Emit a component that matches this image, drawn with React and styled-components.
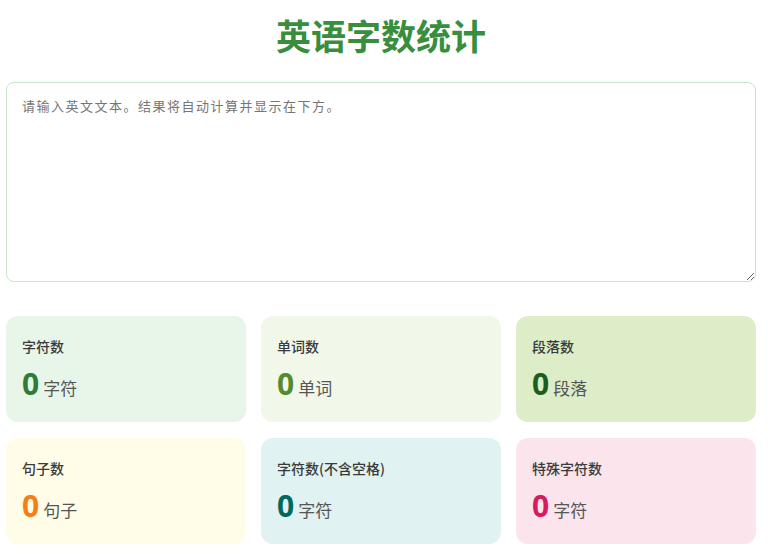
import React from "react";
import styled, { createGlobalStyle } from "styled-components";

const Global = createGlobalStyle`
  html, body { margin: 0; padding: 0; background: #fff; }
  body { font-family: "Noto Sans", "Noto Sans CJK SC", sans-serif; }
`;

const Page = styled.div`
  width: 750px;
  margin: 0 12px 0 6px;
  padding-top: 11px;
`;

const Title = styled.h1`
  margin: 0 0 24px;
  text-align: center;
  font-size: 35px;
  line-height: 47px;
  font-weight: 700;
  color: #388e3c;
  font-family: "Noto Sans CJK SC", sans-serif;
`;

const Input = styled.textarea`
  display: block;
  box-sizing: border-box;
  width: 100%;
  height: 200px;
  padding: 13px 15px;
  border: 1px solid #c8e6c9;
  border-radius: 8px;
  font-family: "Noto Sans CJK SC", sans-serif;
  font-size: 13px;
  letter-spacing: 1.5px;
  line-height: 20px;
  color: #333;
  resize: vertical;
  outline: none;
  &::placeholder { color: #757575; }
`;

const Grid = styled.div`
  display: grid;
  grid-template-columns: repeat(3, 240px);
  column-gap: 15px;
  row-gap: 16px;
  margin-top: 34px;
`;

const Card = styled.div`
  box-sizing: border-box;
  height: 106px;
  padding: 18px 16px 16px;
  border-radius: 12px;
  background: ${(p) => p.$bg};
`;

const Label = styled.div`
  font-family: "Noto Sans CJK SC", sans-serif;
  font-size: 14px;
  font-weight: 500;
  line-height: 24px;
  color: #3a3a3a;
`;

const ValueRow = styled.div`
  display: flex;
  align-items: baseline;
  gap: 4px;
  margin-top: 8px;
`;

const Num = styled.span`
  font-family: "Open Sans", "Noto Sans", sans-serif;
  font-size: 30px;
  font-weight: 700;
  line-height: 36px;
  color: ${(p) => p.$color};
`;

const Unit = styled.span`
  font-family: "Noto Sans CJK SC", sans-serif;
  font-size: 17px;
  color: #555;
`;

const stats = [
  { label: "字符数", unit: "字符", bg: "#e8f5e9", color: "#2e7d32" },
  { label: "单词数", unit: "单词", bg: "#f1f8e9", color: "#558b2f" },
  { label: "段落数", unit: "段落", bg: "#dcedc8", color: "#1b5e20" },
  { label: "句子数", unit: "句子", bg: "#fffde7", color: "#f57f17" },
  { label: "字符数(不含空格)", unit: "字符", bg: "#e0f2f1", color: "#00695c" },
  { label: "特殊字符数", unit: "字符", bg: "#fce4ec", color: "#d81b60" },
];

export default function App() {
  return (
    <>
      <Global />
      <Page>
        <Title>英语字数统计</Title>
        <Input placeholder="请输入英文文本。结果将自动计算并显示在下方。" />
        <Grid>
          {stats.map((s) => (
            <Card key={s.label} $bg={s.bg}>
              <Label>{s.label}</Label>
              <ValueRow>
                <Num $color={s.color}>0</Num>
                <Unit>{s.unit}</Unit>
              </ValueRow>
            </Card>
          ))}
        </Grid>
      </Page>
    </>
  );
}
